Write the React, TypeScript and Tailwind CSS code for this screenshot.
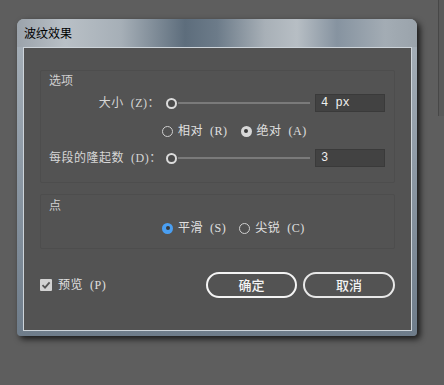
import React, { useState } from 'react';

const font = "font-['Noto_Sans_CJK_SC','Noto_Sans',sans-serif]";
const labelFont = "font-['Liberation_Serif','Noto_Sans_CJK_SC',serif] tracking-[0.5px]";

const SliderRow = ({ label, value }: { label: string; value: string }) => (
  <div className="flex items-center h-[20px]">
    <div className={`w-[111px] text-right text-[12px] text-[#d6d6d6] whitespace-nowrap leading-none ${labelFont}`}>
      {label}
    </div>
    <div className="ml-[6px] w-[11px] h-[11px] rounded-full border-[2px] border-[#dcdcdc] bg-[#4a4a4a]" />
    <div className="ml-[1px] w-[132px] h-[2px] bg-[#7a7a7a]" />
    <div className="ml-[5px] w-[70px] h-[18px] bg-[#424242] border border-[#3a3a3a] flex items-center pl-[5px] text-[12px] text-[#f0f0f0] font-['Liberation_Mono',monospace] leading-none">
      {value}
    </div>
  </div>
);

const Radio = ({
  label,
  checked,
  blue,
  onClick,
}: {
  label: string;
  checked: boolean;
  blue?: boolean;
  onClick: () => void;
}) => (
  <button onClick={onClick} className={`flex items-center gap-[5px] text-[12px] text-[#e0e0e0] leading-none ${labelFont}`}>
    {checked ? (
      <span
        className={`w-[11px] h-[11px] rounded-full flex items-center justify-center ${
          blue ? 'bg-[#4a9ff2]' : 'bg-[#d8d8d8]'
        }`}
      >
        <span className="w-[4px] h-[4px] rounded-full bg-[#3a3a3a]" />
      </span>
    ) : (
      <span className="w-[11px] h-[11px] rounded-full border-[1.5px] border-[#d0d0d0] bg-[#505050]" />
    )}
    <span className="whitespace-nowrap">{label}</span>
  </button>
);

export default function App() {
  const [mode, setMode] = useState<'rel' | 'abs'>('abs');
  const [point, setPoint] = useState<'smooth' | 'sharp'>('smooth');
  const [preview, setPreview] = useState(true);

  return (
    <div className={`w-[444px] h-[385px] bg-[#5e5e5e] flex items-start overflow-hidden ${font}`}>
      {/* dialog */}
      <div className="ml-[17px] mt-[19px] w-[400px] h-[317px] rounded-t-[7px] rounded-b-[4px] flex flex-col bg-[linear-gradient(180deg,#a9b2ba_0%,#8e9aa6_45%,#6e7c8a_100%)] shadow-[3px_3px_6px_rgba(0,0,0,0.75)]">
        <div className="h-[28px] rounded-t-[7px] pl-[7px] flex items-center text-[12px] text-black bg-[linear-gradient(90deg,#9ba3ab_0%,#b9c0c6_12%,#a6afb7_26%,#5d6d7c_42%,#6c7b89_50%,#a8b0b7_62%,#b7bec4_70%,#8693a0_80%,#a3acb4_92%,#9aa3ab_100%)]">
          波纹效果
        </div>
        <div className="flex-1 pl-[6px] pr-[5px] pb-[5px] flex">
          <div className="flex-1 bg-[#535353] border border-[#cdd4da] px-[16px] pt-[22px]">
            {/* 选项 */}
            <div className="border border-[#4d4d4d] rounded-[2px] pl-[8px] pt-[1px] pb-[14px]">
              <div className="text-[12px] leading-[16px] text-[#d0d0d0]">选项</div>
              <div className="mt-[5px]">
                <SliderRow label={'大小\u00a0\u00a0(Z)：'} value="4 px" />
              </div>
              <div className="mt-[8px] h-[20px] flex items-center pl-[113px] gap-[13px]">
                <Radio label={'相对\u00a0\u00a0(R)'} checked={mode === 'rel'} onClick={() => setMode('rel')} />
                <Radio label={'绝对\u00a0\u00a0(A)'} checked={mode === 'abs'} onClick={() => setMode('abs')} />
              </div>
              <div className="mt-[7px]">
                <SliderRow label={'每段的隆起数\u00a0\u00a0(D)：'} value="3" />
              </div>
            </div>
            {/* 点 */}
            <div className="mt-[11px] border border-[#4d4d4d] rounded-[2px] pl-[8px] pt-[2px] pb-[10px]">
              <div className="text-[12px] leading-[16px] text-[#d0d0d0]">点</div>
              <div className="mt-[5px] h-[20px] flex items-center pl-[113px] gap-[13px]">
                <Radio label={'平滑\u00a0\u00a0(S)'} checked={point === 'smooth'} blue onClick={() => setPoint('smooth')} />
                <Radio label={'尖锐\u00a0\u00a0(C)'} checked={point === 'sharp'} blue onClick={() => setPoint('sharp')} />
              </div>
            </div>
            {/* bottom */}
            <div className="mt-[23px] h-[26px] flex items-center">
              <button onClick={() => setPreview(!preview)} className={`flex items-center gap-[6px] text-[12px] text-[#e0e0e0] leading-none ${labelFont}`}>
                <span className="w-[12px] h-[12px] bg-[#d2d2d2] rounded-[1px] flex items-center justify-center">
                  {preview && (
                    <svg width="10" height="10" viewBox="0 0 10 10">
                      <path d="M1.5 5.2 L4 7.6 L8.6 2.4" fill="none" stroke="#555" strokeWidth="1.8" />
                    </svg>
                  )}
                </span>
                {'预览\u00a0\u00a0(P)'}
              </button>
              <div className="ml-auto flex gap-[6px]">
                <button className="w-[91px] h-[26px] rounded-full border-2 border-[#f4f4f4] text-[13px] font-medium text-[#f4f4f4]">
                  确定
                </button>
                <button className="w-[92px] h-[26px] rounded-full border-2 border-[#e8e8e8] text-[13px] font-medium text-[#f4f4f4]">
                  取消
                </button>
              </div>
            </div>
          </div>
        </div>
      </div>
      <div className="ml-[21px] w-[1px] h-[116px] bg-[#474747]" />
      <div className="w-[5px] h-[116px] bg-[#595959]" />
    </div>
  );
}
